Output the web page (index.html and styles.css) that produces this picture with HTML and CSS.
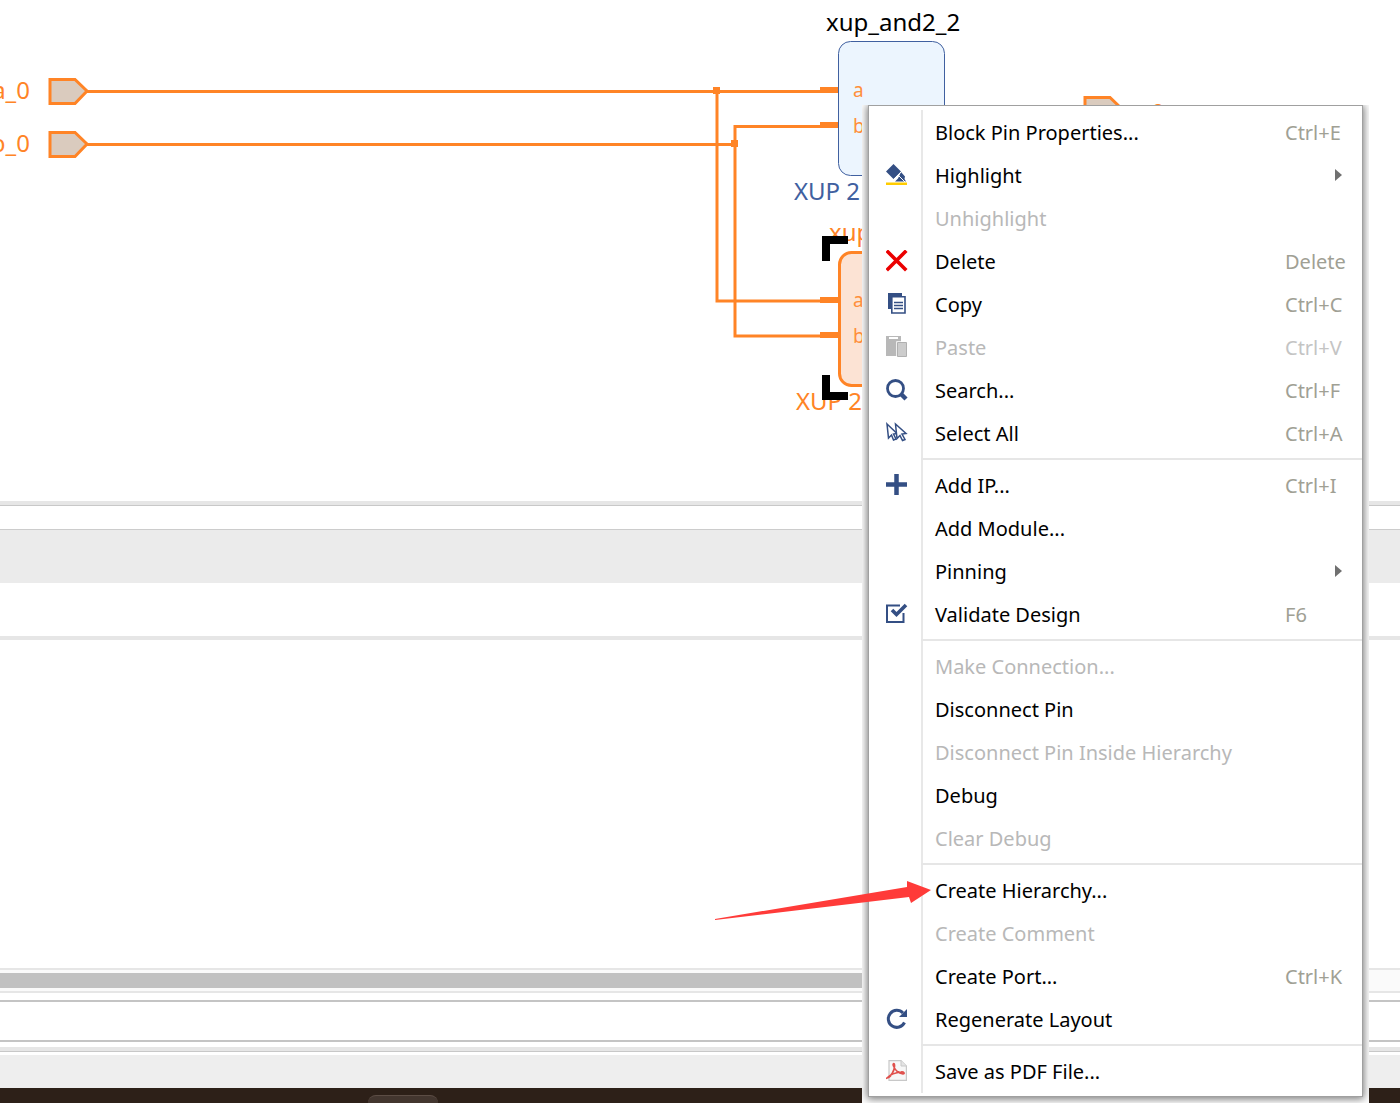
FILE: index.html
```html
<!DOCTYPE html>
<html lang="en">
<head>
<meta charset="utf-8">
<title>Block Design</title>
<link rel="stylesheet" href="styles.css">
</head>
<body>
<main class="workspace">
  <section class="canvas" aria-label="Diagram">
    <svg class="diagram" width="1400" height="500" viewBox="0 0 1400 500">
      <g class="port">
        <path d="M50 79.500H75L87 91L75 103.500H50Z"/>
        <path d="M50 132.500H75L87 144L75 156.500H50Z"/>
        <path d="M1085 97.500H1110L1122 109L1110 121.500H1085Z"/>
      </g>
      <g class="wire">
        <path d="M87 91.500H838M87 144.500H735M717 91V301H838M838 126.500H735V336H838"/>
      </g>
      <rect class="block" x="838.500" y="41.500" width="106" height="134" rx="12"/>
      <rect class="block block-selected" x="839.500" y="252.500" width="105" height="133" rx="12"/>
      <g class="pin">
        <path d="M820 87h18v6h-18zM820 122h18v6h-18zM820 297h18v6h-18zM820 332h18v6h-18z"/>
        <path d="M713 87h7v7h-7zM731 140h7v7h-7z"/>
      </g>
      <g class="net-text">
        <text x="30" y="99" text-anchor="end">a_0</text>
        <text x="30" y="152" text-anchor="end">b_0</text>
        <text x="829" y="241">xup</text>
        <text x="796" y="410">XUP 2</text>
        <text x="1129" y="121">c_0</text>
      </g>
      <g class="pin-text">
        <text x="853" y="97">a</text>
        <text x="853" y="133">b</text>
        <text x="853" y="307">a</text>
        <text x="853" y="343">b</text>
        <text x="919" y="116">y</text>
      </g>
      <text class="name-text" x="826" y="31">xup_and2_2</text>
      <text class="type-text" x="794" y="200">XUP 2</text>
      <path class="corner" d="M826 261V240H848M826 375V396H848"/>
    </svg>
  </section>
  <div class="splitter"></div>
  <div class="strip"></div>
  <div class="tab-band"></div>
  <div class="toolbar"></div>
  <section class="console" aria-label="Console"></section>
  <div class="scroll-track"><div class="scroll-thumb"></div></div>
  <div class="command"></div>
  <div class="splitter"></div>
  <div class="status"></div>
  <footer class="taskbar"><div class="task"></div></footer>
</main>

<div class="popup">
  <div class="menu" role="menu">
    <div class="group">
      <button class="item"><span class="icon"></span><span>Block Pin Properties...</span><kbd>Ctrl+E</kbd></button>
      <button class="item"><span class="icon"><svg width="22" height="22" viewBox="0 0 22 22"><path fill="#344f84" d="M7.500 0L15 7.500L7.500 15L0 7.500ZM15 8L19 12.500L18.500 15L20 17.500H9L12 14.500Z"/><path d="M8 15L15.500 7.500M13 12L19 18" stroke="#fff" stroke-width="1"/><path fill="#fc0" d="M0 18.500H21V21H0Z"/></svg></span><span>Highlight</span><span class="sub"></span></button>
      <button class="item" disabled><span class="icon"></span><span>Unhighlight</span></button>
      <button class="item"><span class="icon"><svg width="22" height="22" viewBox="0 0 22 22"><path d="M2 2L19 19M19 2L2 19" stroke="#eb0000" stroke-width="3.600" stroke-linecap="square"/></svg></span><span>Delete</span><kbd>Delete</kbd></button>
      <button class="item"><span class="icon"><svg width="22" height="22" viewBox="0 0 22 22"><path fill="#344f84" d="M2 0H16V3H6V16H2Z"/><path fill="#fff" stroke="#344f84" stroke-width="1.600" d="M5.800 3.800H19V20H5.800Z"/><path stroke="#344f84" stroke-width="1.500" d="M8 9.500H17M8 12.500H17M8 15.500H17"/></svg></span><span>Copy</span><kbd>Ctrl+C</kbd></button>
      <button class="item" disabled><span class="icon"><svg width="22" height="22" viewBox="0 0 22 22"><path fill="#b8b8b8" d="M0 0H15V20H0Z"/><path fill="#fff" d="M3 1H12V3H3Z"/><path fill="#ccc" stroke="#fff" stroke-width="2.500" d="M11.500 6.500H20.500V20.500H11.500Z"/><path fill="#ccc" stroke="#b0b0b0" d="M11.500 6.500H20.500V20.500H11.500Z"/></svg></span><span>Paste</span><kbd>Ctrl+V</kbd></button>
      <button class="item"><span class="icon"><svg width="22" height="22" viewBox="0 0 22 22"><circle cx="9.500" cy="9.500" r="8" fill="none" stroke="#344f84" stroke-width="2.800"/><path stroke="#344f84" stroke-width="4.400" d="M15 15L20 20"/></svg></span><span>Search...</span><kbd>Ctrl+F</kbd></button>
      <button class="item"><span class="icon"><svg width="22" height="22" viewBox="0 0 22 22"><g fill="#fff" stroke="#344f84" stroke-width="1.500"><path d="M1 2L11 11.500L7.500 12L10 17L7.500 18L5.500 13L2.500 16Z"/><path d="M9.500 2L20 11.500L16 12L19 17.500L16.500 18.500L14 13.500L11 16.500Z"/></g></svg></span><span>Select All</span><kbd>Ctrl+A</kbd></button>
    </div>
    <div class="group">
      <button class="item"><span class="icon"><svg width="22" height="22" viewBox="0 0 22 22"><path stroke="#344f84" stroke-width="4.500" d="M10.500 0V21M0 10.500H21"/></svg></span><span>Add IP...</span><kbd>Ctrl+I</kbd></button>
      <button class="item"><span class="icon"></span><span>Add Module...</span></button>
      <button class="item"><span class="icon"></span><span>Pinning</span><span class="sub"></span></button>
      <button class="item"><span class="icon"><svg width="22" height="22" viewBox="0 0 22 22"><path fill="none" stroke="#344f84" stroke-width="2" d="M14 2.500H1V19H17.500V10"/><path fill="none" stroke="#344f84" stroke-width="3.600" d="M6 7L10.500 11.500L20 2"/></svg></span><span>Validate Design</span><kbd>F6</kbd></button>
    </div>
    <div class="group">
      <button class="item" disabled><span class="icon"></span><span>Make Connection...</span></button>
      <button class="item"><span class="icon"></span><span>Disconnect Pin</span></button>
      <button class="item" disabled><span class="icon"></span><span>Disconnect Pin Inside Hierarchy</span></button>
      <button class="item"><span class="icon"></span><span>Debug</span></button>
      <button class="item" disabled><span class="icon"></span><span>Clear Debug</span></button>
    </div>
    <div class="group">
      <button class="item"><span class="icon"></span><span>Create Hierarchy...</span></button>
      <button class="item" disabled><span class="icon"></span><span>Create Comment</span></button>
      <button class="item"><span class="icon"></span><span>Create Port...</span><kbd>Ctrl+K</kbd></button>
      <button class="item"><span class="icon"><svg width="22" height="22" viewBox="0 0 22 22"><path fill="none" stroke="#344f84" stroke-width="3" d="M17 5A8.500 8.500 0 1 0 18.500 14.500"/><path fill="#344f84" d="M21 1V9H13Z"/></svg></span><span>Regenerate Layout</span></button>
    </div>
    <div class="group">
      <button class="item"><span class="icon"><svg width="22" height="22" viewBox="0 0 22 22"><path fill="#f7f7f7" stroke="#c8c8c8" stroke-width="1.200" d="M3 .6H15L20.400 6V20.400H3Z"/><path fill="#e4e4e4" stroke="#c8c8c8" d="M15 .6V6H20.400"/><path fill="none" stroke="#e0504c" stroke-width="1.700" d="M1 18C5 17 9 10 8.500 5C8.300 2.500 6.500 3.500 7.500 6C9 10 12 13 17 14C19 14 18 11.500 15 12C10 12.500 5 14 1 18Z"/></svg></span><span>Save as PDF File...</span></button>
    </div>
  </div>
</div>

<svg class="pointer" width="218" height="40" viewBox="0 0 218 40"><path fill="#ff3b39" d="M1 39L193 7L193 1L217 10L197 23L195 17L1 40Z"/></svg>
</body>
</html>
```
FILE: styles.css
```css
* { box-sizing: border-box; }

body {
  margin: 0;
  background: #fff;
  color: #000;
  font-family: "Noto Sans", "Open Sans", sans-serif;
  font-size: 20px;
}

.workspace {
  display: flex;
  flex-direction: column;
  min-height: 100vh;
  overflow: hidden;
}

.canvas { height: 501px; overflow: hidden; }
.diagram { display: block; }
.diagram text { font-family: "Noto Sans", "Open Sans", sans-serif; font-size: 24px; }
.port path { fill: #dacbbe; stroke: #ff8426; stroke-width: 3; }
.wire path { fill: none; stroke: #ff8426; stroke-width: 3; }
.block { fill: #ecf5fe; stroke: #4060a0; stroke-width: 1; }
.block-selected { fill: #fce3d4; stroke: #ff8426; stroke-width: 3; }
.pin, .net-text { fill: #ff8426; }
.diagram .pin-text text { fill: #ff8f3c; font-size: 19px; }
.name-text { fill: #000; }
.type-text { fill: #4060a0; }
.corner { fill: none; stroke: #000; stroke-width: 8; }

.splitter { height: 5px; background: #e6e6e6; border-bottom: 1px solid #c8c8c8; }
.strip { height: 23px; }
.tab-band { height: 54px; background: #ebebeb; border-top: 1px solid #ccc; }
.toolbar { height: 57px; border-bottom: 4px solid #e6e6e6; }
.console { flex: 1; min-height: 120px; }
.scroll-track {
  height: 25px;
  padding: 3px 0;
  background: #fafafa;
  border-top: 2px solid #e6e6e6;
  border-bottom: 2px solid #e6e6e6;
}
.scroll-thumb { width: 64%; height: 15px; background: #c1c1c1; }
.command {
  height: 42px;
  margin: 7px 0 5px;
  border-top: 2px solid #c4c4c4;
  border-bottom: 2px solid #c4c4c4;
}
.status { height: 36px; background: #eee; border-top: 3px solid #fff; }
.taskbar { height: 15px; padding: 7px 0 0 368px; background: #2d2018; }
.task {
  width: 70px;
  height: 8px;
  background: #43362f;
  border-top: 1px solid #5c4d45;
  border-radius: 8px 8px 0 0;
}

.popup {
  position: absolute;
  top: 105px;
  left: 862px;
  width: 507px;
  padding: 0 6px 7px;
  overflow: hidden;
  background: #fff;
}
.menu {
  padding: 5px 0 3px;
  background: linear-gradient(#e8e8e8, #e8e8e8) 52px 4px / 2px calc(100% - 7px) no-repeat #fff;
  border: 1px solid #a0a0a0;
  box-shadow: 0 1px 8px 1px #777;
}
.group + .group { position: relative; padding-top: 9px; }
.group + .group::before {
  content: "";
  position: absolute;
  top: 3px;
  left: 52px;
  right: 0;
  height: 2px;
  background: #e6e6e6;
}
.item {
  display: flex;
  align-items: center;
  width: 100%;
  height: 43px;
  padding: 0 16px 0 17px;
  border: 0;
  background: none;
  color: #000;
  font: inherit;
  text-align: left;
  white-space: nowrap;
}
.item:disabled { color: #b8b8b8; }
.icon { width: 49px; height: 24px; }
.icon svg { display: block; }
.item kbd { width: 61px; margin-left: auto; color: #a0a094; font: inherit; }
.item:disabled kbd { color: #c4c4c4; }
.sub {
  margin: 0 4px 2px auto;
  border: 6px solid transparent;
  border-left: 7px solid #707070;
  border-right: 0;
}

.pointer { position: absolute; top: 880px; left: 714px; }
```
